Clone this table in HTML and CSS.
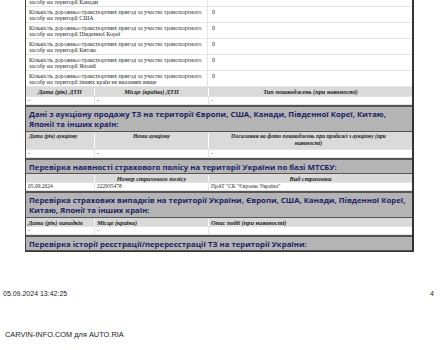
FILE: index.html
```html
<!DOCTYPE html>
<html lang="uk">
<head>
<meta charset="utf-8">
<link rel="stylesheet" href="styles.css">
</head>
<body>
<div class="page">
  <div class="report">
    <div class="count first"><div class="c">Кількість дорожньо-транспортних пригод за участю транспортного засобу на території Канади</div><div class="c">0</div></div>
    <div class="count"><div class="c">Кількість дорожньо-транспортних пригод за участю транспортного засобу на території США</div><div class="c">0</div></div>
    <div class="count"><div class="c">Кількість дорожньо-транспортних пригод за участю транспортного засобу на території Південної Кореї</div><div class="c">0</div></div>
    <div class="count"><div class="c">Кількість дорожньо-транспортних пригод за участю транспортного засобу на території Китаю</div><div class="c">0</div></div>
    <div class="count"><div class="c">Кількість дорожньо-транспортних пригод за участю транспортного засобу на території Японії</div><div class="c">0</div></div>
    <div class="count"><div class="c">Кількість дорожньо-транспортних пригод за участю транспортного засобу на території інших країн не вказаних вище</div><div class="c">0</div></div>

    <div class="row head h-dtp"><div class="c center">Дата (рік) ДТП</div><div class="c center">Місце (країна) ДТП</div><div class="c center">Тип пошкоджень (при наявності)</div></div>
    <div class="row data"><div class="c">-</div><div class="c">-</div><div class="c">-</div></div>

    <div class="section two">Дані з аукціону продажу ТЗ на території Європи, США, Канади, Південної Кореї, Китаю, Японії та інших країн:</div>
    <div class="row head h-auc"><div class="c">Дата (рік) аукціону</div><div class="c center">Назва аукціону</div><div class="c center">Посилання на фото пошкоджень при продажі з аукціону (при<br>наявності)</div></div>
    <div class="row data"><div class="c">-</div><div class="c">-</div><div class="c">-</div></div>

    <div class="section">Перевірка наявності страхового полісу на території України по базі МТСБУ:</div>
    <div class="row head h-ins"><div class="c"></div><div class="c center">Номер страхового полісу</div><div class="c center">Вид страховки</div></div>
    <div class="row data"><div class="c">05.09.2024</div><div class="c">222935478</div><div class="c">ПрАТ "СК "Євроекс Україна"</div></div>

    <div class="section two">Перевірка страхових випадків на території України, Європи, США, Канади, Південної Кореї, Китаю, Японії та інших країн:</div>
    <div class="row head h-case"><div class="c">Дата (рік) випадків</div><div class="c">Місце (країна)</div><div class="c">Опис події (при наявності)</div></div>
    <div class="row data"><div class="c">-</div><div class="c">-</div><div class="c"></div></div>

    <div class="section last">Перевірка історії реєстрації/перереєстрації ТЗ на території України:</div>
  </div>

  <div class="footer">
    <span>05.09.2024 13:42:25</span>
    <span class="pg">4</span>
  </div>
  <div class="brand">CARVIN-INFO.COM для AUTO.RIA</div>
</div>
</body>
</html>
```
FILE: styles.css
```css
* { box-sizing: border-box; }
html, body { margin: 0; padding: 0; background: #fff; }
.page {
  width: 440px;
  height: 350px;
  overflow: hidden;
  font-family: "Liberation Serif", serif;
}
.report {
  margin-left: 25px;
  width: 389px;
  border-left: 1px solid #444;
  border-right: 2px solid #333;
  border-bottom: 1px solid #333;
}
.count {
  display: grid;
  grid-template-columns: 181px 1fr;
  height: 16px;
  border-bottom: 1px solid #e4e4e4;
  font-size: 6px;
  line-height: 6px;
  color: #2a2a2a;
}
.count.first { margin-top: -9px; }
.count .c { padding: 2px 3px 0; }
.count .c + .c { border-left: 1px solid #e4e4e4; padding-left: 4px; }

.row {
  display: grid;
  grid-template-columns: 68px 114px 1fr;
  border-bottom: 1px solid #e2e2e2;
}
.row .c + .c { border-left: 1px solid #e2e2e2; }
.row .c { padding: 0 2px; }
.center { text-align: center; }

.head {
  background: #dadada;
  font-style: italic;
  font-weight: bold;
  font-size: 6.3px;
  line-height: 7px;
  color: #222;
  height: 10px;
  padding-top: 1px;
}
.head .c + .c { border-left-color: #fff; }
.h-auc { height: 18px; font-size: 5.6px; line-height: 6.5px; }
.h-auc .c:first-child { padding-left: 3px; }
.h-auc .c:nth-child(3) { padding: 0 8px 0 4px; }
.h-ins, .h-case { height: 9px; }

.data {
  background: #fff;
  font-size: 5.5px;
  line-height: 7px;
  color: #2a2a2a;
  height: 8px;
}

.section {
  background: #b4b4b4;
  border-top: 2px solid #555;
  border-bottom: 1px solid #555;
  color: #201e66;
  font-family: "Open Sans", sans-serif;
  font-weight: bold;
  font-size: 7.8px;
  line-height: 10px;
  padding: 2px 3px 1px;
}
.section.two { padding-bottom: 2px; }

.footer {
  display: flex;
  justify-content: space-between;
  margin-top: 38px;
  padding: 0 6px 0 3px;
  font-family: "Liberation Sans", sans-serif;
  font-size: 7px;
  color: #222;
}
.brand {
  margin-top: 33px;
  padding-left: 5px;
  font-family: "Liberation Sans", sans-serif;
  font-size: 7.4px;
  color: #222;
}
```
